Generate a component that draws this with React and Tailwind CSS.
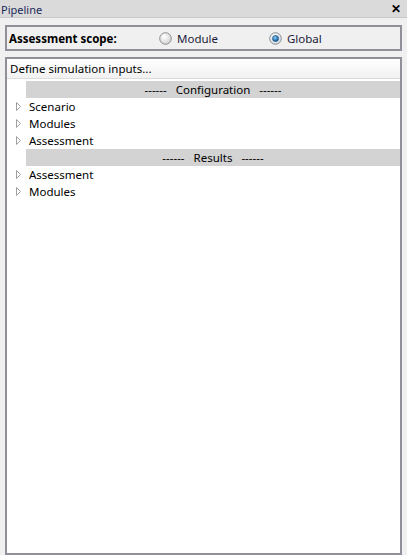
import React from 'react';

const font = { fontFamily: '"Noto Sans", Tahoma, sans-serif' };

const Radio = ({ checked }) => (
    <svg width="13" height="13" viewBox="0 0 13 13">
        <defs>
            <radialGradient id={checked ? 'rc' : 'ru'} cx="0.4" cy="0.35" r="0.7">
                <stop offset="0" stopColor="#ffffff" />
                <stop offset="1" stopColor={checked ? '#c9d6e6' : '#cfcfcf'} />
            </radialGradient>
            <radialGradient id="dot" cx="0.4" cy="0.35" r="0.7">
                <stop offset="0" stopColor="#7fd0ff" />
                <stop offset="1" stopColor="#0a4f8f" />
            </radialGradient>
        </defs>
        <circle cx="6.5" cy="6.5" r="5.8" fill={`url(#${checked ? 'rc' : 'ru'})`} stroke="#8e8f8f" strokeWidth="1" />
        {checked && <circle cx="6.5" cy="6.5" r="3" fill="url(#dot)" stroke="#123a5e" strokeWidth="0.6" />}
    </svg>
);

const Arrow = () => (
    <svg width="6" height="9" viewBox="0 0 6 9" className="shrink-0">
        <path d="M0.5 0.5 L4.5 4.5 L0.5 8.5 Z" fill="none" stroke="#a0a0a0" strokeWidth="1" />
    </svg>
);

const Item = ({ label }) => (
    <div className="h-[17px] flex items-center">
        <div className="w-[22px] flex justify-center pl-[2px]">
            <Arrow />
        </div>
        <span className="text-[11.5px] text-black leading-none">{label}</span>
    </div>
);

const Section = ({ title }) => (
    <div className="h-[17px] ml-[19px] bg-[#d3d3d3] flex items-center justify-center text-[11.5px] text-black whitespace-pre leading-none">
        {`------   ${title}   ------`}
    </div>
);

export default function App() {
    return (
        <div className="w-[407px] h-[555px] bg-[#f0f0f0] flex flex-col" style={font}>
            <div className="h-[18px] bg-[#dadada] border-b border-[#c8c8c8] flex items-center justify-between pl-[1px] pr-[6px]">
                <span className="text-[11px] text-[#1b2a5c] leading-none pt-[1px]">Pipeline</span>
                <span className="text-[12px] font-bold text-black leading-none">✕</span>
            </div>
            <div className="px-[5px] pt-[7px] flex flex-col gap-[6px] flex-1">
                <div className="h-[26px] border-2 border-[#8f909a] flex items-center px-[2px] pt-[1px]">
                    <span className="text-[11.5px] font-bold text-black w-[150px]">Assessment scope:</span>
                    <label className="flex items-center gap-[5px] w-[110px]">
                        <Radio checked={false} />
                        <span className="text-[11.5px] text-[#1b1b3a]">Module</span>
                    </label>
                    <label className="flex items-center gap-[5px]">
                        <Radio checked />
                        <span className="text-[11.5px] text-[#1b1b3a]">Global</span>
                    </label>
                </div>
                <div className="flex-1 border-2 border-[#8f909a] bg-white flex flex-col">
                    <div className="h-[20px] bg-gradient-to-b from-white to-[#f1f1f1] border-b border-[#dcdcdc] flex items-center px-[3px] text-[11.5px] text-black">
                        Define simulation inputs...
                    </div>
                    <div className="pt-[2px] flex flex-col">
                        <Section title="Configuration" />
                        <Item label="Scenario" />
                        <Item label="Modules" />
                        <Item label="Assessment" />
                        <Section title="Results" />
                        <Item label="Assessment" />
                        <Item label="Modules" />
                    </div>
                </div>
            </div>
        </div>
    );
}
